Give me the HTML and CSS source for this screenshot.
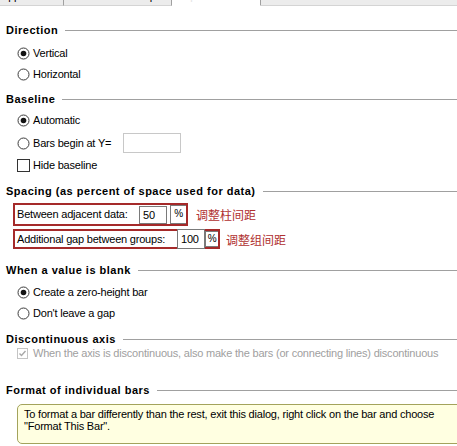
FILE: index.html
```html
<!DOCTYPE html>
<html>
<head>
<meta charset="utf-8">
<link rel="stylesheet" href="styles.css">
</head>
<body>
<div class="page">
  <div class="tabs">
    <div class="tab tab-a"><span class="tab-label">Appearance</span></div>
    <div class="tab tab-b"><span class="tab-label">Data Sets on Graph</span></div>
    <div class="tab tab-sel"><span class="tab-label">Gaps and Direction</span></div>
    <div class="tab-rest"></div>
  </div>

  <div class="heading h-direction"><span>Direction</span><i class="rule"></i></div>
  <div class="opt r-first"><svg class="radio" viewBox="0 0 13 13"><circle cx="6.5" cy="6.5" r="5.5" class="ring"/><circle cx="6.5" cy="6.5" r="2.8" class="dot"/></svg><span>Vertical</span></div>
  <div class="opt"><svg class="radio" viewBox="0 0 13 13"><circle cx="6.5" cy="6.5" r="5.5" class="ring"/></svg><span>Horizontal</span></div>

  <div class="heading h-baseline"><span>Baseline</span><i class="rule"></i></div>
  <div class="opt r-auto"><svg class="radio" viewBox="0 0 13 13"><circle cx="6.5" cy="6.5" r="5.5" class="ring"/><circle cx="6.5" cy="6.5" r="2.8" class="dot"/></svg><span>Automatic</span></div>
  <div class="opt r-bars"><svg class="radio" viewBox="0 0 13 13"><circle cx="6.5" cy="6.5" r="5.5" class="ring"/></svg><span>Bars begin at Y=</span><span class="ybox"></span></div>
  <div class="opt r-hide"><span class="check"></span><span>Hide baseline</span></div>

  <div class="heading h-spacing"><span>Spacing (as percent of space used for data)</span><i class="rule"></i></div>
  <div class="spacing-row row1">
    <div class="redbox box1">
      <span class="lbl lbl1">Between adjacent data:</span>
      <span class="num num1">50</span>
      <span class="pct pct1">%</span>
    </div>
    <span class="note">调整柱间距</span>
  </div>
  <div class="spacing-row row2">
    <div class="redbox box2">
      <span class="lbl lbl2">Additional gap between groups:</span>
      <span class="num num2">100</span>
      <span class="pct pct2">%</span>
    </div>
    <span class="note note2">调整组间距</span>
  </div>

  <div class="heading h-blank"><span>When a value is blank</span><i class="rule"></i></div>
  <div class="opt r-create"><svg class="radio" viewBox="0 0 13 13"><circle cx="6.5" cy="6.5" r="5.5" class="ring"/><circle cx="6.5" cy="6.5" r="2.8" class="dot"/></svg><span>Create a zero-height bar</span></div>
  <div class="opt"><svg class="radio" viewBox="0 0 13 13"><circle cx="6.5" cy="6.5" r="5.5" class="ring"/></svg><span>Don't leave a gap</span></div>

  <div class="heading h-disc"><span>Discontinuous axis</span><i class="rule"></i></div>
  <div class="opt disabled">
    <svg class="dcheck" viewBox="0 0 11 11"><rect x="0.5" y="0.5" width="10" height="10" class="dbox"/><path d="M2.5 5.5 L4.5 7.5 L8.5 3" class="dmark"/></svg>
    <span>When the axis is discontinuous, also make the bars (or connecting lines) discontinuous</span>
  </div>

  <div class="heading h-format"><span>Format of individual bars</span><i class="rule"></i></div>
  <div class="tip">To format a bar differently than the rest, exit this dialog, right click on the bar and choose<br>"Format This Bar".</div>
</div>
</body>
</html>
```

FILE: styles.css
```css
html, body {
  margin: 0;
  padding: 0;
  background: #ffffff;
}

.page {
  width: 457px;
  height: 446px;
  overflow: hidden;
  display: flex;
  flex-direction: column;
  font-family: "Liberation Sans", Arial, sans-serif;
  font-size: 11px;
  letter-spacing: -0.2px;
  color: #000;
}

/* tab strip (clipped at the top) */
.tabs {
  display: flex;
  height: 6px;
  overflow: hidden;
  flex: none;
}
.tab {
  height: 5px;
  overflow: hidden;
  background: #ececec;
  border-right: 1px solid #a0a0a0;
  border-bottom: 1px solid #d4d4d4;
}
.tab-a { width: 63px; }
.tab-b { width: 103px; padding-left: 4px; }
.tab-sel {
  width: 84px;
  background: #ffffff;
  border-bottom: 1px solid #ffffff;
  padding-left: 4px;
}
.tab-rest {
  flex: 1;
  height: 5px;
  background: #ececec;
  border-bottom: 1px solid #d4d4d4;
}
.tab-label {
  display: block;
  line-height: 12px;
  margin-top: -10px;
  white-space: nowrap;
}
.tab-a .tab-label { margin-left: 1px; }
.tab-sel .tab-label { color: #e4e4e4; }

/* section headings */
.heading {
  display: flex;
  align-items: center;
  height: 14px;
  line-height: 14px;
  padding-left: 6px;
  font-weight: bold;
  letter-spacing: 0.5px;
  flex: none;
}
.heading .rule {
  flex: 1;
  height: 1px;
  background: #a0a0a0;
  margin-left: 7px;
}
.h-direction { margin-top: 17px; }
.h-baseline { margin-top: 7px; }
.h-spacing { margin-top: 8px; }
.h-blank { margin-top: 14px; }
.h-disc { margin-top: 8px; }
.h-format { margin-top: 23px; }

/* option rows */
.opt {
  display: flex;
  align-items: center;
  height: 21px;
  line-height: 21px;
  padding-left: 17px;
  flex: none;
  white-space: nowrap;
}
.radio {
  width: 13px;
  height: 13px;
  margin-right: 3px;
  flex: none;
}
.radio .ring {
  fill: #ffffff;
  stroke: #3c3c3c;
  stroke-width: 1;
}
.radio .dot {
  fill: #141414;
}
.r-first { margin-top: 6px; }
.r-auto { margin-top: 4px; }
.r-bars { margin-top: 2px; }
.r-hide { margin-top: 1px; }
.r-create { margin-top: 5px; }

.ybox {
  width: 56px;
  height: 18px;
  border: 1px solid #c8c8c8;
  margin-left: 12px;
  margin-top: -2px;
  background: #fff;
}

.check {
  width: 11px;
  height: 11px;
  border: 1px solid #333;
  margin-right: 3px;
  flex: none;
}

.disabled {
  height: 14px;
  line-height: 14px;
  color: #a0a0a0;
}
.dcheck {
  width: 11px;
  height: 11px;
  margin-right: 5px;
  flex: none;
}
.dcheck .dbox {
  fill: #ffffff;
  stroke: #c4c4c4;
  stroke-width: 1;
}
.dcheck .dmark {
  fill: none;
  stroke: #a8a8a8;
  stroke-width: 1.4;
}

/* spacing rows */
.spacing-row {
  display: flex;
  align-items: center;
  padding-left: 13px;
  flex: none;
  white-space: nowrap;
}
.row1 { margin-top: 5px; height: 23px; }
.row2 { margin-top: 3px; height: 20px; }

.redbox {
  display: flex;
  align-items: center;
  border: 2px solid #a52a2a;
  box-sizing: border-box;
  padding-left: 2px;
}
.box1 { height: 23px; width: 175px; }
.box2 { height: 20px; width: 207px; }
.lbl1 { width: 122px; line-height: 19px; }
.lbl2 { width: 160px; line-height: 16px; }

.num {
  box-sizing: border-box;
  border: 1px solid #7a7a7a;
  padding-left: 3px;
  background: #fff;
  flex: none;
}
.num1 { width: 28px; height: 18px; line-height: 16px; }
.num2 { width: 28px; height: 20px; line-height: 18px; }

.pct {
  box-sizing: border-box;
  border: 1px solid #7a7a7a;
  border-right: none;
  text-align: center;
  font-size: 10px;
  flex: 1;
  align-self: stretch;
  line-height: 15px;
}
.pct1 { margin-left: 3px; }
.pct2 { line-height: 14px; }

.note {
  color: #b03030;
  font-family: "Noto Sans CJK SC", "Noto Sans", sans-serif;
  font-size: 12px;
  letter-spacing: 0;
  margin-left: 8px;
}
.note2 { margin-left: 6px; }

/* yellow tip */
.tip {
  margin-top: 7px;
  margin-left: 17px;
  margin-right: -12px;
  height: 40px;
  box-sizing: border-box;
  border: 1px solid #a3a35c;
  border-radius: 5px;
  background: #ffffe1;
  padding: 3px 6px 0 6px;
  line-height: 12px;
  flex: none;
  white-space: nowrap;
}
```
